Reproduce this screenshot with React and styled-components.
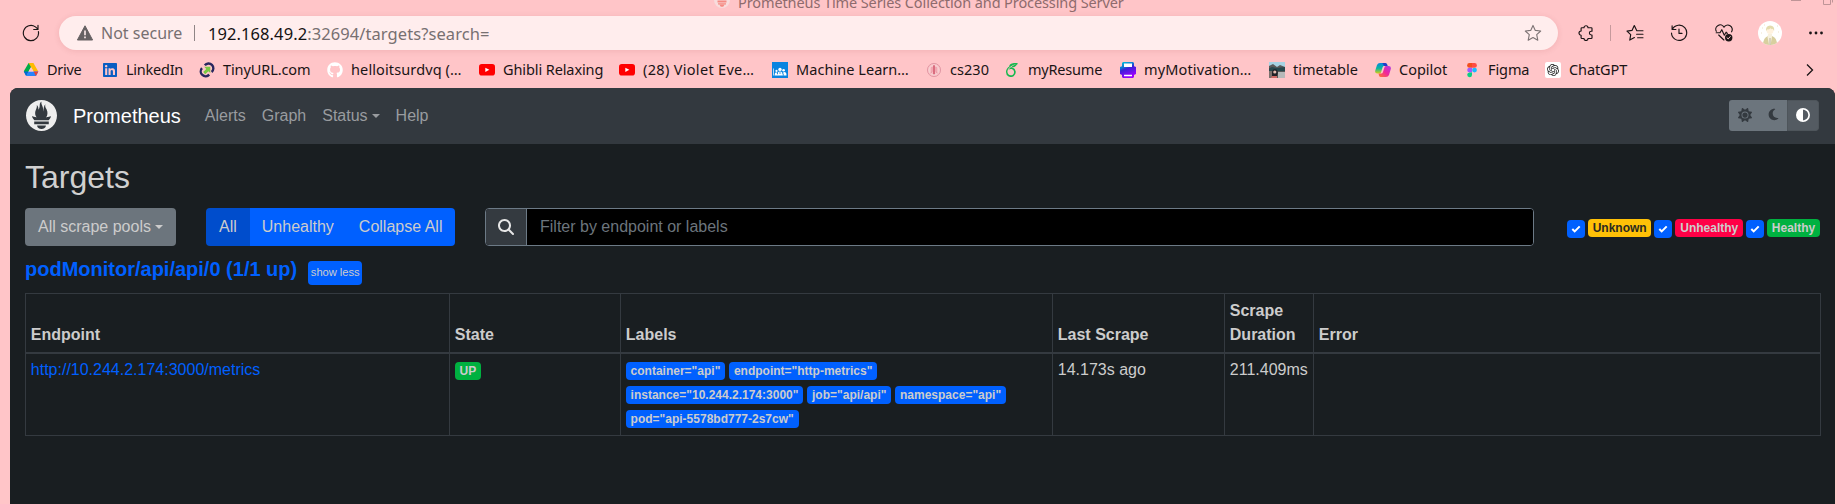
import React from "react";
import styled, { createGlobalStyle, css } from "styled-components";
import { SiPrometheus, SiOpenai, SiOverleaf } from "react-icons/si";
import { FaSun, FaMoon, FaGithub, FaLinkedin, FaMagnifyingGlass, FaCircleHalfStroke } from "react-icons/fa6";

const ui = `"Noto Sans", "Open Sans", sans-serif`;
const web = `"Liberation Sans", Arial, sans-serif`;

const GlobalStyle = createGlobalStyle`
  *, *::before, *::after { box-sizing: border-box; }
  body { margin: 0; background: #ffc5c8; overflow: hidden; }
  svg { display: block; flex: none; }
`;

/* ---------- browser window ---------- */

const Window = styled.div`
  width: 1837px;
  height: 504px;
  display: flex;
  flex-direction: column;
  overflow: hidden;
  background: #ffc5c8;
  font-family: ${ui};
`;

const TitleBar = styled.div`
  height: 16px;
  flex: none;
  display: flex;
  align-items: flex-end;
  overflow: hidden;
  padding: 0 3px 0 714px;
  color: #8e6b6d;
`;

const TitleIcon = styled.div`
  width: 16px;
  height: 16px;
  margin: 0 8px 8px 0;
`;

const TitleText = styled.div`
  flex: 1;
  font-size: 14.5px;
  line-height: 22px;
  white-space: nowrap;
  padding-bottom: 3px;
  letter-spacing: ${(p) => p.$track}px;
`;

const WindowControls = styled.div`
  display: flex;
  align-items: flex-end;
  gap: 22px;
  padding-bottom: 11px;
`;

const Toolbar = styled.div`
  height: 34px;
  flex: none;
  display: flex;
  align-items: center;
  padding-left: 22px;
`;

const AddressBar = styled.div`
  width: 1499px;
  height: 34px;
  margin-left: 19px;
  padding: 0 16px 0 18px;
  display: flex;
  align-items: center;
  border-radius: 17px;
  background: #ffeded;
  box-shadow: 0 1px 6px rgba(120, 0, 10, 0.1);
  font-size: 16px;
  white-space: nowrap;
`;

const Security = styled.span`
  width: 93px;
  margin-left: 8px;
  color: #777071;
  letter-spacing: ${(p) => p.$track}px;
`;

const BarDivider = styled.span`
  width: 1px;
  height: 16px;
  background: ${(p) => p.$color};
`;

const Url = styled.span`
  flex: 1;
  margin-left: 13px;
  color: #777071;
  font-size: 16.5px;
  letter-spacing: ${(p) => p.$track}px;
  b { font-weight: 400; color: #141112; }
`;

const Tools = styled.div`
  display: flex;
  align-items: center;
  margin-left: 19px;
`;

const Tool = styled.div`
  width: ${(p) => p.$w}px;
  display: flex;
  justify-content: center;
`;

const Avatar = styled.div`
  width: 24px;
  height: 24px;
  border-radius: 50%;
  overflow: hidden;
  background: #fff;
`;

const BookmarksBar = styled.div`
  height: 38px;
  flex: none;
  display: flex;
  align-items: center;
  gap: 16px;
  padding: 0 23px 0 23px;
`;

const Bookmark = styled.div`
  display: flex;
  align-items: center;
  gap: 8px;
`;

const BookmarkIcon = styled.span`
  width: 16px;
  height: 16px;
  margin-top: 1px;
  display: flex;
  align-items: center;
  justify-content: center;
`;

const BookmarkLabel = styled.span`
  width: ${(p) => p.$w}px;
  font-size: 14.5px;
  line-height: 20px;
  color: #1a1415;
  white-space: nowrap;
  letter-spacing: ${(p) => p.$track}px;
`;

const More = styled.div`
  margin: 2px 0 0 auto;
`;

/* ---------- page ---------- */

const Page = styled.main`
  flex: 1;
  margin: 0 2px 0 10px;
  border-radius: 8px 8px 0 0;
  overflow: hidden;
  background: #191e21;
  color: #ccc;
  font: 16px/24px ${web};
`;

const Navbar = styled.nav`
  height: 56px;
  display: flex;
  align-items: center;
  padding: 0 16px;
  background: #33393f;
`;

const Brand = styled.a`
  display: flex;
  align-items: center;
  gap: 16px;
  margin-right: 16px;
  font-size: 20px;
  line-height: 30px;
  color: #fff;
  svg { color: #eee; margin-top: -1px; }
`;

const NavLink = styled.a`
  display: flex;
  align-items: center;
  padding: 8px;
  color: #999c9f;
`;

const Caret = styled.span`
  margin-left: 4px;
  border: 4.8px solid transparent;
  border-top-color: currentColor;
  border-bottom: 0;
  margin-top: -1px;
`;

const ThemeToggle = styled.div`
  display: flex;
  margin: -1px 0 0 auto;
  border-radius: 3px;
  overflow: hidden;
`;

const ThemeButton = styled.button`
  height: 31px;
  width: ${(p) => p.$w}px;
  padding: 0 0 2px;
  border: ${(p) => (p.$active ? "1px solid #4e555b" : "0")};
  border-radius: ${(p) => (p.$active ? "0 3px 3px 0" : "0")};
  display: flex;
  align-items: center;
  justify-content: center;
  background: ${(p) => (p.$active ? "#545b62" : "#6c757d")};
  color: ${(p) => (p.$active ? "#fff" : "#343a40")};
`;

const Content = styled.section`
  padding: 14px 15px 0;
`;

const PageTitle = styled.h2`
  margin: 0 0 11px;
  font-size: 32px;
  font-weight: 400;
  line-height: 39px;
  color: #d0d0d0;
`;

const Filters = styled.div`
  display: flex;
  align-items: center;
  height: 38px;
`;

const buttonBase = css`
  height: 38px;
  display: flex;
  align-items: center;
  border: 0;
  font: 16px/24px ${web};
  color: #ccc;
  white-space: nowrap;
`;

const PoolsButton = styled.button`
  ${buttonBase}
  width: 151px;
  padding: 0 13px;
  border-radius: 4px;
  background: #6c757d;
`;

const ButtonGroup = styled.div`
  display: flex;
  width: 249px;
  margin-left: 30px;
  border-radius: 4px;
  overflow: hidden;
`;

const GroupButton = styled.button`
  ${buttonBase}
  flex: ${(p) => (p.$last ? "1" : "none")};
  padding: 0 ${(p) => (p.$last ? 12 : 13)}px 0 ${(p) => (p.$first ? 13 : 12)}px;
  background: ${(p) => (p.$active ? "#004dcc" : "#0060ff")};
`;

const SearchGroup = styled.div`
  width: 1049px;
  height: 38px;
  margin-left: 30px;
  display: flex;
  border: 1px solid #6c7a86;
  border-radius: 4px;
  overflow: hidden;
  background: #000;
`;

const SearchAddon = styled.div`
  width: 41px;
  display: flex;
  align-items: center;
  justify-content: center;
  background: #343a40;
  border-right: 1px solid #6c7a86;
  color: #e6e6e6;
`;

const SearchInput = styled.input`
  flex: 1;
  border: 0;
  padding: 0 12px 0 13px;
  background: #000;
  font: 16px/24px ${web};
  color: #ccc;
  &::placeholder { color: #6c757d; opacity: 1; }
`;

const HealthFilters = styled.div`
  display: flex;
  align-items: flex-start;
  margin-left: auto;
  margin-top: 2px;
  height: 18px;
`;

const Check = styled.span`
  width: 18px;
  height: 18px;
  margin: 1px 3px 0 3px;
  border-radius: 4px;
  background: #0060ff;
  display: flex;
  align-items: center;
  justify-content: center;
`;

const badgeColors = {
  warning: ["#ffc107", "#2a2a20"],
  danger: ["#ff0046", "#ccc"],
  success: ["#00b140", "#ccc"],
  primary: ["#0060ff", "#ccc"],
};

const Badge = styled.span`
  height: 18px;
  display: inline-flex;
  align-items: center;
  padding: 0 4.8px;
  border-radius: 4px;
  font: bold 12px/12px ${web};
  white-space: nowrap;
  background: ${(p) => badgeColors[p.$tone][0]};
  color: ${(p) => badgeColors[p.$tone][1]};
`;

const PoolHeader = styled.div`
  display: flex;
  align-items: flex-start;
  gap: 11px;
  margin-top: 11px;
  height: 36px;
`;

const PoolName = styled.h3`
  margin: 0;
  font: bold 20px/24px ${web};
  color: #0060ff;
`;

const ShowLess = styled.button`
  height: 24px;
  width: 54px;
  margin-top: 4px;
  padding: 0 0 2px;
  border: 0;
  border-radius: 4px;
  background: #0060ff;
  color: #ccc;
  font: 11.2px/16px ${web};
  letter-spacing: -0.04px;
  white-space: nowrap;
`;

const Table = styled.table`
  width: 1795px;
  table-layout: fixed;
  border-collapse: collapse;
  border: 1px solid #343a40;
  th, td { padding: 4.8px; text-align: left; border: 1px solid #343a40; }
  th { height: 58px; vertical-align: bottom; border-bottom-width: 2px; }
  td { height: 83px; vertical-align: top; }
`;

const Endpoint = styled.a`
  color: #0060ff;
`;

const StateCell = styled.div`
  padding-top: 4px;
  display: flex;
`;

const Labels = styled.div`
  display: flex;
  flex-wrap: wrap;
  gap: 6px 4px;
  padding: 4px 0 2px;
`;

/* ---------- drawings ---------- */

const Stroke = ({ size = 16, view = 16, color = "#1a1415", width = 1.15, children }) => (
  <svg width={size} height={size} viewBox={`0 0 ${view} ${view}`} fill="none" stroke={color} strokeWidth={width} strokeLinecap="round" strokeLinejoin="round">
    {children}
  </svg>
);

const Reload = () => (
  <Stroke size={18} view={18}>
    <path d="M16.4 7.6A7.6 7.6 0 1 1 13.4 2.9L16 5.1M16 1.3v4.2h-4.3" />
  </Stroke>
);

const Warning = () => (
  <svg width="16" height="16" viewBox="0 0 16 16">
    <path d="M8 .8 15.6 15H.4Z" fill="#666163" stroke="#666163" strokeWidth="1" strokeLinejoin="round" />
    <path d="M8 5.5v4.7M8 11.6v1.7" stroke="#ffeded" strokeWidth="1.6" />
  </svg>
);

const Star = () => (
  <Stroke size={18} view={18} color="#7c7374" width={1.1}>
    <path d="m9 1.4 2.3 5 5.4.6-4 3.7 1.1 5.5L9 13.5l-4.8 2.7 1.1-5.5-4-3.7 5.4-.6Z" />
  </Stroke>
);

const Puzzle = () => (
  <Stroke size={16}>
    <path d="M3.9 2.7H6a2 2 0 0 1 4 0h3.2q.8 0 .8.8v2.700h-.7a1.900 1.900 0 0 0 0 3.800h.7v2.700q0 .8-.8.8H10a2 2 0 0 1-4 0H3.900q-.8 0-.8-.8V10.200a2.100 2.100 0 0 1 0-4.200V3.500q0-.8.8-.8Z" />
  </Stroke>
);

const Favorites = () => (
  <Stroke size={18} view={18}>
    <path d="M10.8 6.7 8.3 1.6 6 6.4l-5 .7 3.7 3.6-.9 5.4 4.6-2.5M11 6.7h6M10.6 10.2H17M11.6 13.7H17" />
  </Stroke>
);

const HistoryIcon = () => (
  <Stroke size={18} view={18}>
    <path d="M2.4 5.2A7.6 7.6 0 1 1 1.5 9M2.1 1.8v3.7h3.8M9 5v4.4h3" />
  </Stroke>
);

const Heart = () => (
  <Stroke size={18} view={18}>
    <path d="M1.3 7.3A4.2 4.2 0 0 1 9 3.2a4.2 4.2 0 0 1 7.6 4.6M1.2 8.7H5l1.8-3 2.5 5.5 1.8-3 1.2 1.3M3.7 11l5.2 5" />
    <circle cx="13.7" cy="13.7" r="3.7" fill="#1a1415" stroke="none" />
    <path d="m12 13.8 1.2 1.1 2.1-2.4" stroke="#ffc5c8" strokeWidth="1" />
  </Stroke>
);

const AvatarArt = () => (
  <svg width="24" height="24" viewBox="0 0 24 24">
    <path d="M5 24q.2-7.3 5-9h4q5 1.6 5 9Z" fill="#d8cf9f" />
    <path d="M10 13h4v3l-1.5 8h-1.4L9.5 16Z" fill="#f7f1df" />
    <circle cx="12" cy="9.6" r="3.5" fill="#fff2df" />
    <path d="M8.1 10q-.7-5.4 4-5.6 4.8.2 4 5.6l-1.4-2.2-1 .5-1-1-2 1.2-.9-.5Z" fill="#e3dbae" />
    <path d="M12 17v7" stroke="#aaa28b" strokeWidth=".8" />
    <path d="M4 7h1M19 5h1M6 4h1M20 11h1M3 12h1" stroke="#eee3c9" />
  </svg>
);

const Dots = () => (
  <svg width="16" height="4" viewBox="0 0 16 4" fill="#1a1415">
    <circle cx="2.5" cy="2" r="1.4" /><circle cx="8" cy="2" r="1.4" /><circle cx="13.5" cy="2" r="1.4" />
  </svg>
);

const Drive = () => (
  <svg width="16" height="16" viewBox="0 0 16 16">
    <path d="M5.6 1h4.8L8 5.2 3.2 13.4.8 9.3Z" fill="#00ac47" />
    <path d="M5.6 1h4.8l4.9 8.4h-4.7Z" fill="#ffba00" />
    <path d="M5.5 9.4h9.8L13 14H3.1Z" fill="#2684fc" />
    <path d="M.8 9.4h4.7L3.1 14Z" fill="#0066da" />
    <path d="m10.6 9.4 4.7 0L12.9 14Z" fill="#ea4335" />
    <path d="m8 5.2 2.5 4.2h-5Z" fill="#ffc5c8" />
  </svg>
);

const TinyUrl = () => (
  <svg width="16" height="16" viewBox="0 0 16 16" fill="none">
    <path d="M5.8 3.3A4.8 4.8 0 1 1 12.6 10" stroke="#29275f" strokeWidth="2.4" />
    <path d="M3 6.1A4.8 4.8 0 1 0 10.2 12.6" stroke="#29275f" strokeWidth="2.4" />
    <path d="M5.2 4.7h6.1v6.2L9.4 9.2 6.2 12.2 4.2 10.1l3.1-3Z" fill="#7ac943" />
  </svg>
);

const YouTube = () => (
  <svg width="16" height="12" viewBox="0 0 16 12">
    <rect width="16" height="11.6" rx="2.8" fill="#f00" />
    <path d="m6.3 3.7 4 2.1-4 2.2Z" fill="#fff" />
  </svg>
);

const Classroom = () => (
  <svg width="16" height="16" viewBox="0 0 16 16">
    <rect width="16" height="16" fill="#0a84e0" />
    <g fill="#fff">
      <circle cx="8" cy="7.4" r="1.7" /><circle cx="4.5" cy="8.900" r="1.100" /><circle cx="11.600" cy="8.300" r="1.300" />
      <path d="M5.200 13.400q0-4 2.800-4t2.900 4Z" /><path d="M2.500 13.400q0-3 2-3.300l1 3.300ZM11.300 10.200q3.200-.8 3.200 3.200h-3Z" /><path d="M1 6.500h.7v7H1Z" />
    </g>
    <path d="M7 11h2M5 12l1-1M10.400 11.500l1 1" stroke="#0a84e0" strokeWidth=".8" />
  </svg>
);

const Seal = () => (
  <svg width="16" height="16" viewBox="0 0 16 16" fill="none" stroke="#e39aa6">
    <circle cx="8" cy="8" r="6.600" fill="#f9bfc4" /><circle cx="8" cy="8" r="4.900" strokeWidth=".7" stroke="#f4dede" />
    <path d="M8 3.300v9" stroke="#cf5269" strokeWidth="1.500" /><path d="M6 5v4.800L4.500 11M10 5v4.800l1.500 1.200" stroke="#e7909e" />
  </svg>
);

const Printer = () => (
  <svg width="16" height="16" viewBox="0 0 16 16">
    <defs>
      <linearGradient id="printer" x1="0" y1="0" x2=".4" y2="1">
        <stop offset="0" stopColor="#00d0da" /><stop offset=".38" stopColor="#126bd2" /><stop offset=".5" stopColor="#3c20d7" /><stop offset="1" stopColor="#9b00ff" />
      </linearGradient>
    </defs>
    <path d="M3 0h10l1 1v3.300l2 .7v7l-2 1v2l-1 1H3l-1-1v-2l-2-1V5l2-.7V1Z" fill="url(#printer)" />
    <path d="M4 1.500h8V5H4ZM4 12.700h8v1.500H4Z" fill="#fff" />
  </svg>
);

const Photo = () => (
  <svg width="16" height="16" viewBox="0 0 16 16">
    <rect width="16" height="16" fill="#5a5a59" />
    <path d="M0 0h16v5l-5-2-3 2-4-3-4 2Z" fill="#a7d3e3" />
    <path d="M0 6.5 3 5l5 1 8-1v4H0Z" fill="#26484d" />
    <path d="M0 9h5v7H0Z" fill="#7b706c" /><path d="M9 10h7v6H9Z" fill="#b7b9b9" />
    <path d="M3 11q0-4 3-3.8 3.3.2 2.7 4.3l-1 4.5H3Z" fill="#202127" />
    <circle cx="5.8" cy="10" r="1.6" fill="#e5beb2" /><path d="M3 14h5v2H2Z" fill="#cf6965" />
  </svg>
);

const Copilot = () => (
  <svg width="16" height="16" viewBox="0 0 16 16">
    <defs>
      <linearGradient id="cool" x1="0" y1="0" x2="0" y2="1"><stop offset="0" stopColor="#0787dd" /><stop offset=".5" stopColor="#08b6a0" /><stop offset="1" stopColor="#d8cd16" /></linearGradient>
      <linearGradient id="warm" x1="1" y1="0" x2="0" y2="1"><stop offset="0" stopColor="#a93de5" /><stop offset=".5" stopColor="#f1259c" /><stop offset="1" stopColor="#ff7a28" /></linearGradient>
    </defs>
    <path d="M5 1h5.2q1.4 0 1.9 1.6l.4 1.4H9.2q-1.3 0-1.7 1.4L6 10.5q-.4 1-1.6 1H2.3Q-.4 11.4.2 8.7L2 3Q2.8 1 5 1Z" fill="url(#cool)" />
    <path d="M7.4 1h2.8q1.4 0 1.9 1.6l.4 1.4H9.2Z" fill="#223bc8" />
    <path d="M11 15H5.8q-1.4 0-1.8-1.5L3.5 11.5h2.8q1.2 0 1.6-1.3l1.6-4.9Q9.9 4 11.2 4h2.4q2.8.2 2.2 3L14 13q-.8 2-3 2Z" fill="url(#warm)" />
  </svg>
);

const Figma = () => (
  <svg width="16" height="16" viewBox="0 0 16 16">
    <path d="M8 1H5.5a2.4 2.4 0 0 0 0 4.8H8Z" fill="#f24e1e" /><path d="M8 1h2.5a2.4 2.4 0 0 1 0 4.8H8Z" fill="#ff4c43" />
    <path d="M8 5.8H5.5a2.3 2.3 0 0 0 0 4.6H8Z" fill="#a259ff" /><circle cx="10.5" cy="8.1" r="2.4" fill="#1abcfe" />
    <path d="M8 10.4H5.5A2.4 2.4 0 1 0 8 12.9Z" fill="#0acf83" />
  </svg>
);

const ChatTile = styled.span`
  width: 16px;
  height: 16px;
  display: flex;
  align-items: center;
  justify-content: center;
  border-radius: 2px;
  background: #fff;
  color: #222;
`;

const CheckMark = () => (
  <svg width="10" height="8" viewBox="0 0 10 8" fill="none"><path d="m1.3 4 2.4 2.4L8.7 1.4" stroke="#fff" strokeWidth="2" /></svg>
);

/* ---------- data ---------- */

const bookmarks = [
  { label: "Drive", w: 39, icon: <Drive />, track: -0.3 },
  { label: "LinkedIn", w: 57, icon: <FaLinkedin size={16} color="#0a5dc2" />, track: -0.25 },
  { label: "TinyURL.com", w: 88, icon: <TinyUrl />, track: -0.1 },
  { label: "helloitsurdvq (…", w: 112, icon: <FaGithub size={16} color="#fff" />, track: 0.12 },
  { label: "Ghibli Relaxing", w: 100, icon: <YouTube />, track: -0.1 },
  { label: "(28) Violet Eve…", w: 113, icon: <YouTube />, track: 0.32 },
  { label: "Machine Learn…", w: 114, icon: <Classroom />, track: 0.05 },
  { label: "cs230", w: 38, icon: <Seal />, track: 0.05 },
  { label: "myResume", w: 76, icon: <SiOverleaf size={14} color="#17b84f" />, track: -0.2 },
  { label: "myMotivation…", w: 109, icon: <Printer />, track: 0.15 },
  { label: "timetable", w: 66, icon: <Photo />, track: 0 },
  { label: "Copilot", w: 49, icon: <Copilot />, track: 0 },
  { label: "Figma", w: 41, icon: <Figma />, track: -0.1 },
  { label: "ChatGPT", w: 60, icon: <ChatTile><SiOpenai size={12} /></ChatTile>, track: -0.1 },
];

const health = [
  { label: "Unknown", tone: "warning" },
  { label: "Unhealthy", tone: "danger" },
  { label: "Healthy", tone: "success" },
];

const columns = [
  ["Endpoint", 424], ["State", 171], ["Labels", 432], ["Last Scrape", 172], ["Scrape Duration", 89], ["Error", 507],
];

const labels = [
  'container="api"', 'endpoint="http-metrics"', 'instance="10.244.2.174:3000"',
  'job="api/api"', 'namespace="api"', 'pod="api-5578bd777-2s7cw"',
];

export default function App() {
  return (
    <Window>
      <GlobalStyle />
      <TitleBar>
        <TitleIcon>
          <svg width="16" height="16" viewBox="0 0 16 16"><circle cx="8" cy="8" r="8" fill="#f8dcdc" /><path d="M3.5 8.500h9V10.500h-9ZM4 11.200h8v1.200H4ZM5.500 12.800h5l-1.300 2H6.800Z" fill="#f58a83" /></svg>
        </TitleIcon>
        <TitleText $track={-0.1}>Prometheus Time Series Collection and Processing Server</TitleText>
        <WindowControls>
          <svg width="10" height="6" viewBox="0 0 10 6"><path d="M0 1.5h10" stroke="#bf9497" /></svg>
          <svg width="11" height="10" viewBox="0 0 11 10" fill="none" stroke="#bf9497"><path d="M.5 2.5h7v7h-7ZM2.5.5h7v7" /></svg>
        </WindowControls>
      </TitleBar>

      <Toolbar>
        <Reload />
        <AddressBar>
          <Warning />
          <Security $track={0}>Not secure</Security>
          <BarDivider $color="#8f8586" />
          <Url $track={0.08}><b>192.168.49.2</b>:32694/targets?search=</Url>
          <Star />
        </AddressBar>
        <Tools>
          <Tool $w={17}><Puzzle /></Tool>
          <Tool $w={32}><BarDivider $color="#c6999c" /></Tool>
          <Tool $w={18}><Favorites /></Tool>
          <Tool $w={70}><HistoryIcon /></Tool>
          <Tool $w={20}><Heart /></Tool>
          <Tool $w={71}><Avatar><AvatarArt /></Avatar></Tool>
          <Tool $w={21}><Dots /></Tool>
        </Tools>
      </Toolbar>

      <BookmarksBar>
        {bookmarks.map((b) => (
          <Bookmark key={b.label}>
            <BookmarkIcon>{b.icon}</BookmarkIcon>
            <BookmarkLabel $w={b.w} $track={b.track}>{b.label}</BookmarkLabel>
          </Bookmark>
        ))}
        <More>
          <svg width="8" height="14" viewBox="0 0 8 14" fill="none" stroke="#1a1415" strokeWidth="1.3"><path d="m1 1.5 5.5 5.5L1 12.5" /></svg>
        </More>
      </BookmarksBar>

      <Page>
        <Navbar>
          <Brand><SiPrometheus size={31} />Prometheus</Brand>
          <NavLink>Alerts</NavLink>
          <NavLink>Graph</NavLink>
          <NavLink>Status<Caret /></NavLink>
          <NavLink>Help</NavLink>
          <ThemeToggle>
            <ThemeButton $w={31}><FaSun size={14} /></ThemeButton>
            <ThemeButton $w={27}><FaMoon size={13} /></ThemeButton>
            <ThemeButton $w={32} $active><FaCircleHalfStroke size={14} /></ThemeButton>
          </ThemeToggle>
        </Navbar>

        <Content>
          <PageTitle>Targets</PageTitle>
          <Filters>
            <PoolsButton>All scrape pools<Caret /></PoolsButton>
            <ButtonGroup>
              <GroupButton $first $active>All</GroupButton>
              <GroupButton>Unhealthy</GroupButton>
              <GroupButton $last>Collapse All</GroupButton>
            </ButtonGroup>
            <SearchGroup>
              <SearchAddon><FaMagnifyingGlass size={16} /></SearchAddon>
              <SearchInput placeholder="Filter by endpoint or labels" />
            </SearchGroup>
            <HealthFilters>
              {health.map((h) => (
                <React.Fragment key={h.label}>
                  <Check><CheckMark /></Check>
                  <Badge $tone={h.tone}>{h.label}</Badge>
                </React.Fragment>
              ))}
            </HealthFilters>
          </Filters>

          <PoolHeader>
            <PoolName>podMonitor/api/api/0 (1/1 up)</PoolName>
            <ShowLess>show less</ShowLess>
          </PoolHeader>

          <Table>
            <colgroup>{columns.map(([name, w]) => <col key={name} width={w} />)}</colgroup>
            <thead>
              <tr>{columns.map(([name]) => <th key={name}>{name}</th>)}</tr>
            </thead>
            <tbody>
              <tr>
                <td><Endpoint>http://10.244.2.174:3000/metrics</Endpoint></td>
                <td><StateCell><Badge $tone="success">UP</Badge></StateCell></td>
                <td><Labels>{labels.map((l) => <Badge key={l} $tone="primary">{l}</Badge>)}</Labels></td>
                <td>14.173s ago</td>
                <td>211.409ms</td>
                <td />
              </tr>
            </tbody>
          </Table>
        </Content>
      </Page>
    </Window>
  );
}
